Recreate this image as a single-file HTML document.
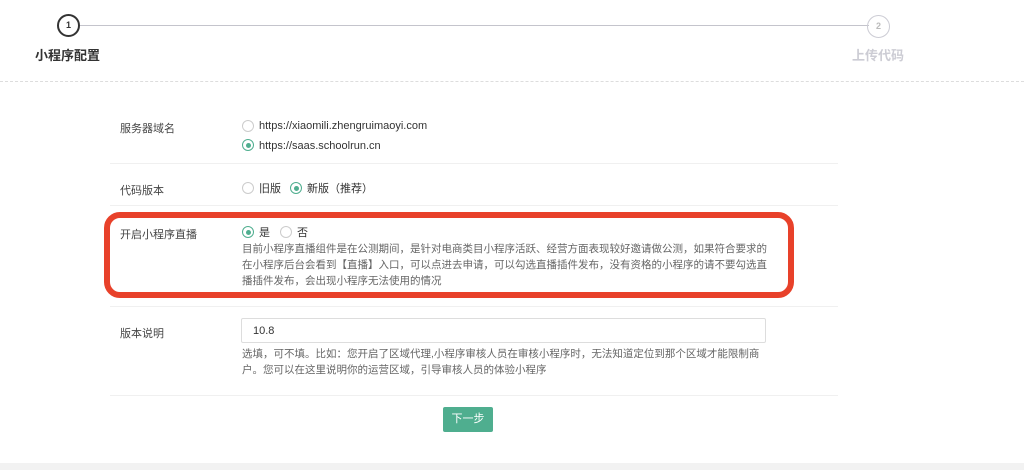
<!DOCTYPE html>
<html><head><meta charset="utf-8"><style>
*{margin:0;padding:0;box-sizing:border-box}
body{width:1024px;height:470px;background:#fff;font-family:"Liberation Sans","Noto Sans CJK SC",sans-serif;position:relative;overflow:hidden;color:#333}
.a{position:absolute}
.circ{position:absolute;width:23px;height:23px;border-radius:50%;text-align:center;line-height:19px;font-size:9px;font-weight:bold}
.lbl{position:absolute;left:120px;font-size:11px;color:#444}
.sep{position:absolute;left:110px;width:728px;height:1px;background:#f0f0f0}
.r{position:absolute;width:12px;height:12px;border-radius:50%;border:1px solid #ccc;background:#fff}
.r.on{border-color:#4fae8f}
.r.on:after{content:"";position:absolute;left:2.5px;top:2.5px;width:5px;height:5px;border-radius:50%;background:#4fae8f}
.t{position:absolute;font-size:11px;color:#333;line-height:14px}
.d{position:absolute;left:242px;font-size:10.5px;color:#666;line-height:16px;width:526px}
</style></head><body>
<div class="circ" style="left:57px;top:14px;border:2px solid #333;color:#333">1</div>
<div class="a" style="left:80px;top:25px;width:789px;height:1px;background:#c4c4cc"></div>
<div class="circ" style="left:867px;top:15px;border:1.5px solid #ccccd4;color:#bbb;line-height:20px">2</div>
<div class="a" style="left:35px;top:45px;font-size:13px;font-weight:bold;color:#333">小程序配置</div>
<div class="a" style="left:852px;top:45px;font-size:13px;font-weight:bold;color:#ccccd4">上传代码</div>
<div class="a" style="left:0;top:81px;width:1024px;border-top:1px dashed #ddd"></div>

<div class="lbl" style="top:120px">服务器域名</div>
<div class="r" style="left:242px;top:120px"></div><div class="t" style="left:259px;top:119px">https://xiaomili.zhengruimaoyi.com</div>
<div class="r on" style="left:242px;top:139px"></div><div class="t" style="left:259px;top:139px">https://saas.schoolrun.cn</div>
<div class="sep" style="top:163px"></div>

<div class="lbl" style="top:182px">代码版本</div>
<div class="r" style="left:242px;top:182px"></div><div class="t" style="left:259px;top:182px">旧版</div>
<div class="r on" style="left:290px;top:182px"></div><div class="t" style="left:307px;top:182px">新版（推荐）</div>
<div class="sep" style="top:205px"></div>

<div class="a" style="left:104px;top:212px;width:690px;height:86px;border:6px solid #e8412a;border-radius:16px"></div>
<div class="lbl" style="top:226px">开启小程序直播</div>
<div class="r on" style="left:242px;top:226px"></div><div class="t" style="left:259px;top:226px">是</div>
<div class="r" style="left:280px;top:226px"></div><div class="t" style="left:297px;top:226px">否</div>
<div class="d" style="top:241px">目前小程序直播组件是在公测期间，是针对电商类目小程序活跃、经营方面表现较好邀请做公测，如果符合要求的在小程序后台会看到【直播】入口，可以点进去申请，可以勾选直播插件发布，没有资格的小程序的请不要勾选直播插件发布，会出现小程序无法使用的情况</div>
<div class="sep" style="top:306px"></div>

<div class="lbl" style="top:325px">版本说明</div>
<div class="a" style="left:241px;top:318px;width:525px;height:25px;border:1px solid #ddd;border-radius:2px;font-size:11px;padding:6px 11px;color:#333">10.8</div>
<div class="d" style="top:346px">选填，可不填。比如：您开启了区域代理,小程序审核人员在审核小程序时，无法知道定位到那个区域才能限制商户。您可以在这里说明你的运营区域，引导审核人员的体验小程序</div>
<div class="sep" style="top:395px"></div>

<div class="a" style="left:443px;top:407px;width:50px;height:25px;background:#4fae8f;border-radius:2px;color:#fff;font-size:11px;text-align:center;line-height:25px">下一步</div>
<div class="a" style="left:0;top:463px;width:1024px;height:7px;background:#f2f2f2"></div>
</body></html>
